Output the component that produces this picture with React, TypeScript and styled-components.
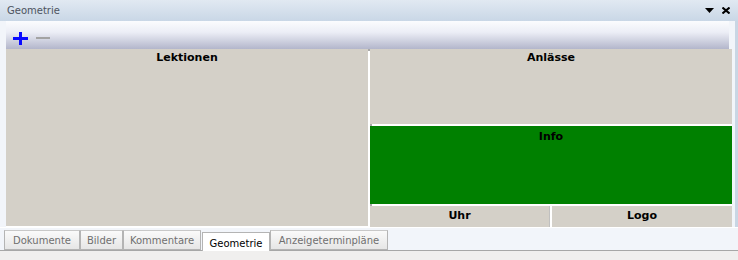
import { createGlobalStyle, styled } from "styled-components"

const GlobalStyle = createGlobalStyle`
  html, body {
    margin: 0;
    padding: 0;
    background: #f0f0f0;
  }
  * {
    box-sizing: border-box;
  }
`

const Window = styled.div`
  width: 738px;
  height: 260px;
  display: flex;
  flex-direction: column;
  background: #dfe7f0;
  font-family: "DejaVu Sans", "Liberation Sans", sans-serif;
  overflow: hidden;
`

const TitleBar = styled.div`
  height: 21px;
  flex: none;
  display: flex;
  align-items: center;
  justify-content: space-between;
  padding: 0 8px 0 7px;
  background: linear-gradient(#e1e9f2, #c9d7e6);
`

const Title = styled.span`
  font-size: 10px;
  color: #4d5460;
`

const TitleButtons = styled.div`
  display: flex;
  align-items: center;
  gap: 8px;
`

const Frame = styled.div`
  flex: none;
  display: flex;
  flex-direction: column;
  padding: 0 6px 0 6px;
  border-right: 3px solid #c9d6e4;
  background: #f2f5fa;
`

const Toolbar = styled.div`
  height: 28px;
  display: flex;
  align-items: center;
  gap: 8px;
  padding: 6px 0 0 7px;
  background: linear-gradient(#fbfcfe 0%, #eceef6 40%, #b3b6cb 100%);
`

const Content = styled.div`
  height: 178px;
  display: grid;
  grid-template-columns: 362px 2px 362px;
  background: #d4d0c8;
  border-bottom: 1px solid #ffffff;
`

const Pane = styled.div<{ $bg?: string; $top?: number }>`
  background: ${(p) => p.$bg ?? "#d4d0c8"};
  display: flex;
  justify-content: center;
  padding-top: ${(p) => p.$top ?? 2}px;
  min-height: 0;
`

const Heading = styled.div`
  font-size: 11px;
  font-weight: bold;
  color: #000;
  line-height: 13px;
`

const Splitter = styled.div<{ $dir: "v" | "h" }>`
  background: #ffffff;
  ${(p) => (p.$dir === "v" ? "width: 2px;" : "height: 2px;")}
  position: relative;
  &::before {
    content: "";
    position: absolute;
    left: 0;
    top: 0;
    width: 2px;
    height: 2px;
    background: #a8a8a8;
  }
`

const RightColumn = styled.div`
  display: grid;
  grid-template-rows: 75px 2px 78px 2px 21px;
  min-height: 0;
`

const BottomRow = styled.div`
  display: grid;
  grid-template-columns: 179px 3px 180px;
`

const RowDivider = styled.div`
  background: #ffffff;
  border-left: 1px solid #c0c0c0;
`

const TabStrip = styled.div`
  height: 24px;
  flex: none;
  display: flex;
  align-items: flex-start;
  padding: 2px 0 0 4px;
  background: #f2f5fa;
  border-top: 1px solid #ffffff;
  border-bottom: 1px solid #a7a7a7;
`

const Tab = styled.div<{ $active?: boolean; $width: number }>`
  width: ${(p) => p.$width}px;
  height: ${(p) => (p.$active ? "21px" : "20px")};
  margin-top: ${(p) => (p.$active ? "2px" : "0")};
  margin-left: ${(p) => (p.$active ? "1px" : "0")};
  display: flex;
  align-items: center;
  justify-content: center;
  font-size: 10px;
  white-space: nowrap;
  color: ${(p) => (p.$active ? "#000" : "#6f6f6f")};
  background: ${(p) =>
    p.$active ? "#ffffff" : "linear-gradient(#fafafa, #e6e6e6)"};
  border: 1px solid #b4b4b4;
  border-top-color: ${(p) => (p.$active ? "#b4b4b4" : "#c8c8c8")};
  ${(p) => (p.$active ? "border-bottom: none;" : "")}
`

const Footer = styled.div`
  flex: 1;
  background: #f0efee;
`

const tabs = [
  { label: "Dokumente", width: 76 },
  { label: "Bilder", width: 43 },
  { label: "Kommentare", width: 78 },
  { label: "Geometrie", width: 68 },
  { label: "Anzeigeterminpläne", width: 118 },
]

const PlusIcon = () => (
  <svg width="15" height="13" viewBox="0 0 15 13">
    <rect x="0" y="5" width="15" height="3" fill="#0a0aff" />
    <rect x="6" y="0" width="3" height="13" fill="#0a0aff" />
  </svg>
)

const MinusIcon = () => (
  <svg width="14" height="13" viewBox="0 0 14 13">
    <rect x="0" y="5" width="14" height="2" fill="#a3a3a3" />
  </svg>
)

export default function App() {
  return (
    <>
      <GlobalStyle />
      <Window>
        <TitleBar>
          <Title>Geometrie</Title>
          <TitleButtons>
            <svg width="9" height="6" viewBox="0 0 9 6">
              <path d="M0 0 H9 L4.5 5 Z" fill="#000" />
            </svg>
            <svg width="8" height="7" viewBox="0 0 8 7">
              <path
                d="M0.5 0.5 L7.5 6.5 M7.5 0.5 L0.5 6.5"
                stroke="#000"
                strokeWidth="2"
                fill="none"
              />
            </svg>
          </TitleButtons>
        </TitleBar>
        <Frame>
          <Toolbar>
            <PlusIcon />
            <MinusIcon />
          </Toolbar>
          <Content>
            <Pane>
              <Heading>Lektionen</Heading>
            </Pane>
            <Splitter $dir="v" />
            <RightColumn>
              <Pane>
                <Heading>Anlässe</Heading>
              </Pane>
              <Splitter $dir="h" />
              <Pane $bg="#008000" $top={4}>
                <Heading>Info</Heading>
              </Pane>
              <Splitter $dir="h" />
              <BottomRow>
                <Pane $top={3}>
                  <Heading>Uhr</Heading>
                </Pane>
                <RowDivider />
                <Pane $top={3}>
                  <Heading>Logo</Heading>
                </Pane>
              </BottomRow>
            </RightColumn>
          </Content>
        </Frame>
        <TabStrip>
          {tabs.map((t) => (
            <Tab key={t.label} $width={t.width} $active={t.label === "Geometrie"}>
              {t.label}
            </Tab>
          ))}
        </TabStrip>
        <Footer />
      </Window>
    </>
  )
}
